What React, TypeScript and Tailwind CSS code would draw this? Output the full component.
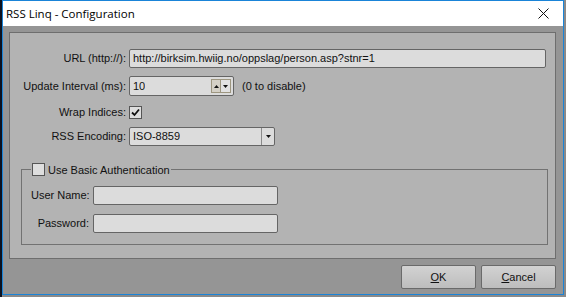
import React from 'react';

const font = { fontFamily: '"Liberation Sans", Arial, sans-serif' };

const Input: React.FC<{ value?: string; className?: string; children?: React.ReactNode }> = ({ value, className = '', children }) => (
  <div className={`relative flex items-center rounded-[2px] border border-[#656565] bg-[#dcdcdc] pl-[3px] text-[11px] text-[#111] ${className}`}>
    <span className="truncate">{value}</span>
    {children}
  </div>
);

const Check: React.FC<{ checked?: boolean }> = ({ checked }) => (
  <span className="flex h-[13px] w-[13px] items-center justify-center border border-[#555] bg-[#dedede]">
    {checked && (
      <svg width="9" height="9" viewBox="0 0 9 9">
        <path d="M1 4.5 L3.5 7 L8 1.5" fill="none" stroke="#111" strokeWidth="1.8" />
      </svg>
    )}
  </span>
);

const Label: React.FC<{ children: React.ReactNode; className?: string }> = ({ children, className = '' }) => (
  <span className={`whitespace-nowrap text-right text-[11px] text-[#111] ${className}`}>{children}</span>
);

export default function App() {
  return (
    <div className="flex h-[297px] w-[566px] bg-[#8a8a8a]" style={font}>
      <div className="w-[2px] bg-[#0c1220]" />
      <div className="flex h-[295px] w-[562px] flex-col border border-[#1a84d8] bg-[#959595]">
        {/* title bar */}
        <div className="flex h-[25px] items-center justify-between bg-white pl-[3px] pr-[14px]">
          <span className="text-[11.5px] text-black" style={{ fontFamily: '"Open Sans", "Noto Sans", sans-serif' }}>
            RSS Linq - Configuration
          </span>
          <svg width="11" height="11" viewBox="0 0 11 11">
            <path d="M0.5 0.5 L10.5 10.5 M10.5 0.5 L0.5 10.5" stroke="#111" strokeWidth="1" />
          </svg>
        </div>

        {/* main panel */}
        <div className="ml-[6px] mr-[7px] mt-[6px] flex h-[227px] flex-col border border-[#6e6e6e] bg-[#b3b3b3] pt-[16px]">
          <div className="grid grid-cols-[116px_1fr] items-center gap-x-[3px]">
            <Label>URL (http://):</Label>
            <Input value="http://birksim.hwiig.no/oppslag/person.asp?stnr=1" className="mr-[9px] h-[19px]" />
          </div>

          <div className="mt-[8px] grid grid-cols-[116px_1fr] items-center gap-x-[3px]">
            <Label>Update Interval (ms):</Label>
            <div className="flex items-center">
              <Input value="10" className="h-[20px] w-[105px]">
                <div className="absolute right-[2px] top-[2px] flex h-[14px]">
                  <span className="flex w-[10px] items-center justify-center border border-[#9d9680] bg-[#d4d0c6]">
                    <svg width="5" height="3" viewBox="0 0 5 3"><path d="M2.5 0 L5 3 L0 3 Z" fill="#111" /></svg>
                  </span>
                  <span className="flex w-[10px] items-center justify-center border border-l-0 border-[#9d9680] bg-[#e2e2e2]">
                    <svg width="5" height="3" viewBox="0 0 5 3"><path d="M0 0 L5 0 L2.5 3 Z" fill="#111" /></svg>
                  </span>
                </div>
              </Input>
              <span className="ml-[8px] text-[11px] text-[#111]">(0 to disable)</span>
            </div>
          </div>

          <div className="mt-[8px] grid grid-cols-[116px_1fr] items-center gap-x-[3px]">
            <Label>Wrap Indices:</Label>
            <Check checked />
          </div>

          <div className="mt-[6px] grid grid-cols-[116px_1fr] items-center gap-x-[3px]">
            <Label>RSS Encoding:</Label>
            <Input value="ISO-8859" className="h-[19px] w-[146px]">
              <span className="absolute right-0 top-0 flex h-full w-[13px] items-center justify-center border-l border-[#8a8a8a]">
                <svg width="5" height="3" viewBox="0 0 5 3"><path d="M0 0 L5 0 L2.5 3 Z" fill="#111" /></svg>
              </span>
            </Input>
          </div>

          <fieldset className="ml-[11px] mr-[7px] mt-[16px] h-[83px] border border-[#727272] px-[9px]">
            <legend className="flex items-center gap-[3px] px-px text-[11px] text-[#111]">
              <Check />
              <span>Use Basic Authentication</span>
            </legend>
            <div className="mt-[8px] grid grid-cols-[58px_185px] items-center gap-x-[4px] gap-y-[9px]">
              <Label>User Name:</Label>
              <Input className="h-[19px]" />
              <Label>Password:</Label>
              <Input className="h-[19px]" />
            </div>
          </fieldset>
        </div>

        {/* buttons */}
        <div className="mr-[7px] mt-[6px] flex justify-end gap-[5px]">
          <button className="h-[24px] w-[75px] rounded-[2px] border border-[#6a6a6a] bg-gradient-to-b from-[#d2d2d2] to-[#bdbdbd] text-[11px] text-[#111]">
            <span className="underline">O</span>K
          </button>
          <button className="h-[24px] w-[75px] rounded-[2px] border border-[#6a6a6a] bg-gradient-to-b from-[#d2d2d2] to-[#bdbdbd] text-[11px] text-[#111]">
            <span className="underline">C</span>ancel
          </button>
        </div>
      </div>
    </div>
  );
}
